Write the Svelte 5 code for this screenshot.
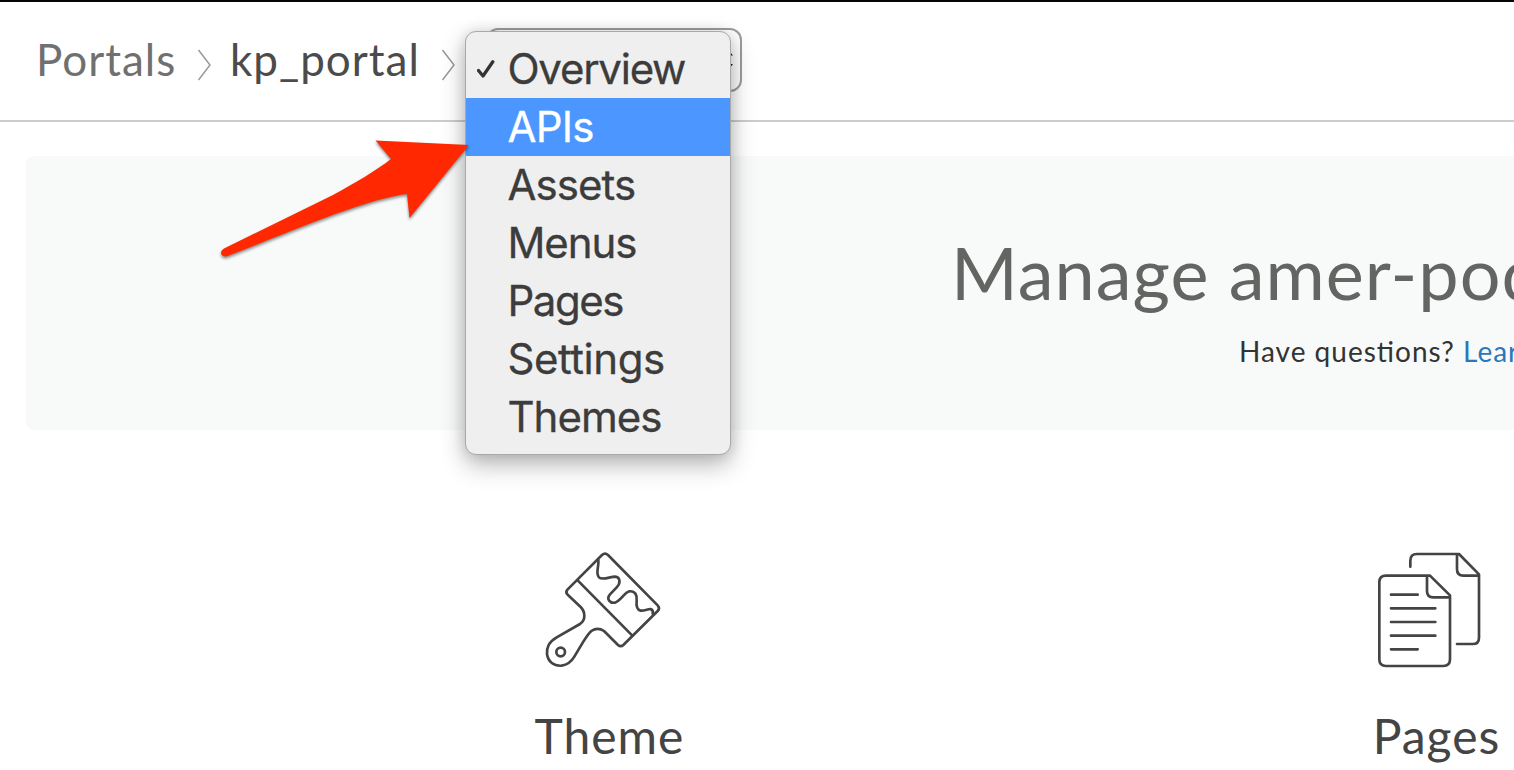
<script>
  const items = [
    { label: 'Overview', checked: true, ls: -1.25 },
    { label: 'APIs', active: true, ls: -0.75 },
    { label: 'Assets', ls: -0.95 },
    { label: 'Menus', ls: -1.1 },
    { label: 'Pages', ls: -1.5 },
    { label: 'Settings', ls: -0.45 },
    { label: 'Themes', ls: -1 }
  ];
</script>

<div class="page">
  <header>
    <nav>
      <span class="crumb portals">Portals</span>
      <svg class="sep" width="15" height="32" viewBox="0 0 15 32"><path d="M1.5 1L13 16L1.5 31" /></svg>
      <span class="crumb current">kp_portal</span>
      <svg class="sep" width="15" height="32" viewBox="0 0 15 32"><path d="M1.5 1L13 16L1.5 31" /></svg>
    </nav>
    <div class="select">
      <svg width="14" height="24" viewBox="0 0 14 24"><path d="M0 7.500L7 -1L14 7.500ZM0 16L7 24.500L14 16Z" /></svg>
    </div>
  </header>

  <section class="hero">
    <h1>Manage amer-pod</h1>
    <p>Have questions? <a href="#learn">Learn more</a></p>
  </section>

  <section class="tiles">
    <div class="tile">
      <svg class="icon brush" width="150" height="140" viewBox="0 0 450 420">
        <path d="M216 45L113 148Q105 156 113 164L152 201Q163 212 163 228Q163 243 150 252L80 292C57 306 50 320 51 342C54 365 72 379 95 377C115 374 126 362 133 350L160 305C170 289 176 280 184 273Q203 260 222 273L264 315Q272 322 280 315L383 213Q391 205 383 196L234 45Q225 37 216 45Z" />
        <path d="M143 121L307 287M205 60C208 80 195 98 207 112C217 122 240 110 255 110C272 112 272 130 260 142L240 163C228 178 240 190 255 188C272 183 283 158 298 154C315 152 322 165 320 182C318 200 322 210 332 212C345 213 354 206 362 207Q371 211 368 221" />
        <circle cx="92" cy="336" r="13" />
      </svg>
      <h2>Theme</h2>
    </div>
    <div class="tile">
      <svg class="icon docs" width="154" height="140" viewBox="0 0 462 420">
        <path d="M151 80V62Q151 42 171 42H297L357 103V293Q357 312 338 312H291M291 44V88Q291 107 310 107H356" />
        <path d="M78 107H210L270 166V358Q270 378 250 378H78Q58 378 58 358V127Q58 107 78 107ZM201 108V153Q201 172 220 172H269" />
        <path d="M93 164H173M93 205H226M93 246H226M93 287H226M93 328H173" />
      </svg>
      <h2>Pages</h2>
    </div>
  </section>

  <ul class="menu">
    {#each items as item}
      <li class:active={item.active}>
        {#if item.checked}
          <svg class="check" width="18" height="18" viewBox="0 0 18 18"><path d="M1.500 10.500L6 16L15.800 1.800" /></svg>
        {/if}
        <span style="letter-spacing: {item.ls}px">{item.label}</span>
      </li>
    {/each}
  </ul>

  <svg class="arrow" width="270" height="140" viewBox="210 130 270 140">
    <path d="M469 145L375.500 140.500L391 159C377 170 355 183 333 195L224 248.500Q220.500 250.500 221 253.500Q222.500 257 227 256.300C290 232 365 199 407 194L409.500 218Z" />
  </svg>
</div>

<style>
  :global(body) { overflow: hidden; background: #fff; }
  .page { position: relative; width: 1514px; height: 770px; overflow: hidden; box-sizing: border-box; border-top: 2px solid #050505; font-family: Lato, sans-serif; }
  header { display: flex; height: 118px; border-bottom: 2px solid #ccc; }
  nav { display: flex; align-items: flex-start; width: 486px; box-sizing: border-box; padding: 30px 0 0 36px; flex: none; }
  .crumb { font-size: 44px; line-height: 54px; letter-spacing: 1px; white-space: nowrap; flex: none; }
  .portals { width: 161px; color: #707070; }
  .current { width: 211px; padding-left: 18px; color: #4b4b4b; }
  .sep { margin-top: 17px; flex: none; fill: none; stroke: #999; stroke-width: 1.5; }
  .select { display: flex; align-items: center; justify-content: flex-end; width: 256px; height: 64px; box-sizing: border-box; margin-top: 26px; padding-right: 7px; border: 2px solid #9d9d9d; border-radius: 12px; }
  .select svg { overflow: visible; fill: #222; }
  .hero { margin: 34px 0 0 26px; height: 274px; width: 1600px; border-radius: 8px; background: #f8faf9; }
  h1 { margin: 0; padding: 72px 0 0 925px; font-size: 72px; line-height: 88px; font-weight: 400; letter-spacing: 1px; color: #636563; white-space: nowrap; }
  p { margin: 0; padding: 19px 0 0 1213px; font-size: 28px; line-height: 33px; letter-spacing: 1px; color: #333; white-space: nowrap; font-feature-settings: "liga" 1; }
  a { color: #2a77bd; text-decoration: none; }
  .tiles { display: grid; grid-template-columns: 827px 827px; padding: 110px 0 0 195px; }
  .tile { display: flex; flex-direction: column; align-items: center; }
  .icon { fill: none; stroke: #444; stroke-width: 8; stroke-linecap: round; stroke-linejoin: round; }
  .brush { margin-right: 7px; }
  .docs { margin-left: 3px; }
  h2 { margin: 27px 0 0; padding-left: 2px; font-size: 48px; line-height: 58px; font-weight: 400; letter-spacing: 1px; color: #444; }
  .menu { position: absolute; left: 465px; top: 29px; width: 266px; height: 424px; box-sizing: border-box; margin: 0; padding: 8px 0 0; list-style: none; border: 1px solid #a9a9a9; border-radius: 11px; background: #efefef; box-shadow: 0 10px 24px rgba(0,0,0,.28), 0 0 14px rgba(0,0,0,.12); font-family: Inter, sans-serif; font-size: 42px; color: #3c3c3c; -webkit-text-stroke: .3px currentColor; }
  li { display: flex; position: relative; height: 58px; line-height: 58px; padding-left: 41.5px; }
  .active { background: #4b97ff; color: #fff; }
  .check { position: absolute; left: 11px; top: 20px; fill: none; stroke: #333; stroke-width: 3.300; stroke-linecap: round; stroke-linejoin: round; }
  .arrow { position: absolute; left: 210px; top: 128px; fill: #ff2800; filter: drop-shadow(0 2px 1.500px rgba(0,0,0,.45)); }
</style>
